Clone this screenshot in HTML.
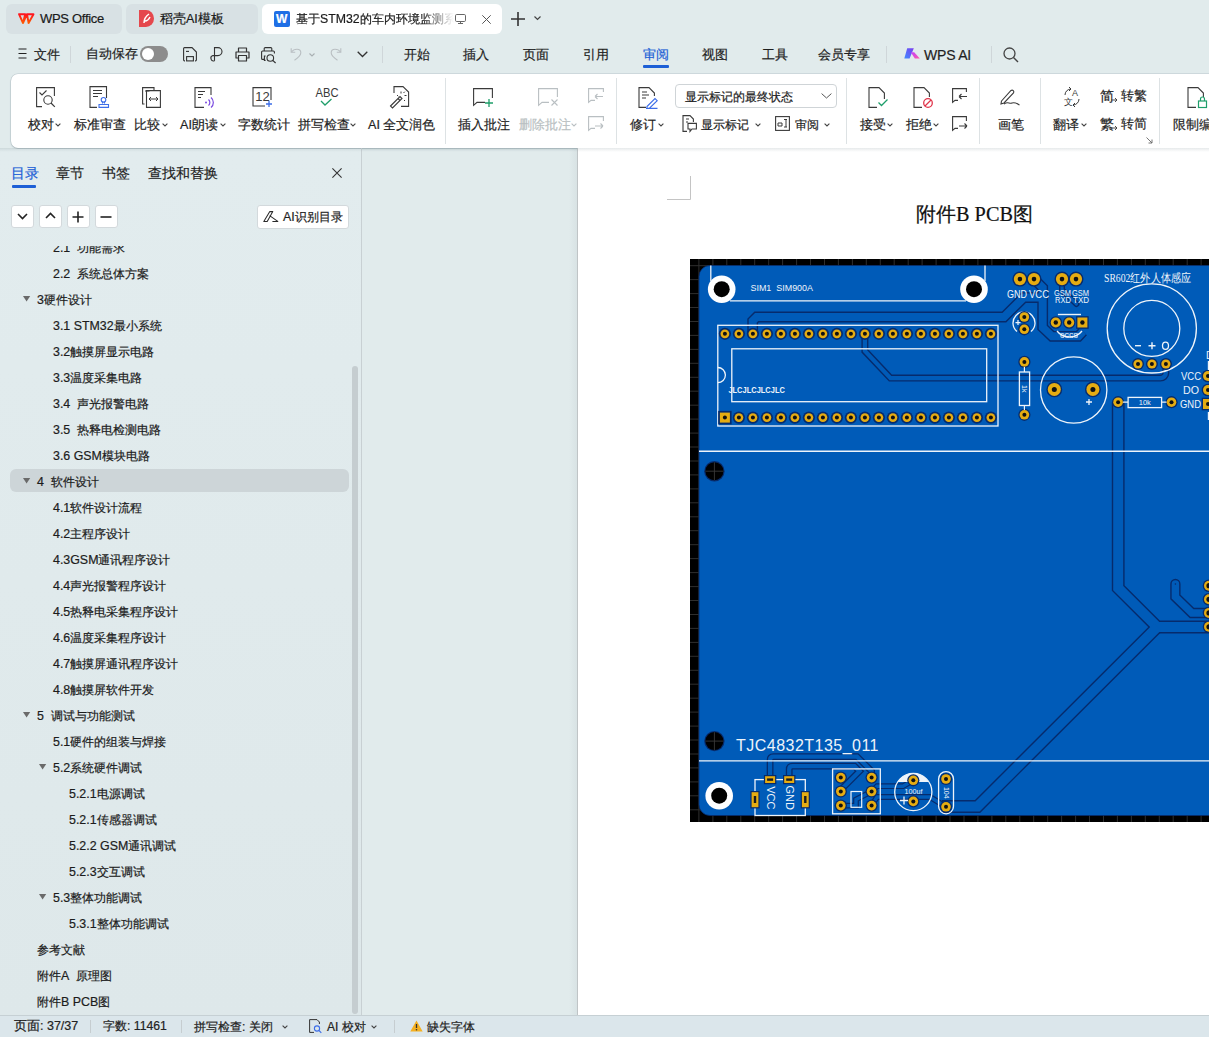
<!DOCTYPE html>
<html><head><meta charset="utf-8">
<style>
*{box-sizing:border-box}
html,body{margin:0;padding:0;width:1209px;height:1037px;overflow:hidden;background:#e1ebec;font-family:"Liberation Sans",sans-serif;color:#1f1f1f;position:relative}
.a{position:absolute;white-space:nowrap;line-height:1;-webkit-text-stroke:0.2px currentColor}
.tab{position:absolute;top:4px;height:30px;border-radius:6px;background:#d8e1e4}
.m{font-size:13.4px;top:48px}
.rl{font-size:12.5px;top:117px}
.toc{position:absolute;font-size:12.5px;white-space:nowrap;line-height:1}
.tri{position:absolute;width:0;height:0;border-left:3.6px solid transparent;border-right:3.6px solid transparent;border-top:5.4px solid #6a6a6a}
.sep{position:absolute;width:1px;background:#cfd6d9}
svg{position:absolute;overflow:visible}
</style></head><body>
<!-- tabs -->
<div class="tab" style="left:6px;width:116px"></div>
<div class="tab" style="left:126px;width:132px"></div>
<div class="tab" style="left:262px;width:240px;background:#fff"></div>
<svg style="left:17px;top:12px" width="18" height="13" viewBox="0 0 18 13"><defs><linearGradient id="wl" x1="0" y1="0" x2="0" y2="1"><stop offset="0" stop-color="#ff1420"/><stop offset="1" stop-color="#ff5a00"/></linearGradient></defs><path d="M2 2.2 H8.2 L6 11 Z M10 2.2 H16.5 L11.6 11 Z M9.8 2.4 L6 11" fill="none" stroke="url(#wl)" stroke-width="1.9" stroke-linejoin="round"/></svg>
<div class="a" style="left:40px;top:12px;font-size:13px;color:#1a1a1a;letter-spacing:-0.3px">WPS Office</div>
<svg style="left:139px;top:10px" width="15" height="17" viewBox="0 0 15 17"><path d="M0 0 H7 A8 8.5 0 0 1 7 17 H0 Z" fill="#e5484d"/><path d="M5 13 C5 9 7 6 10 4 M6 11 C8 11 10 9 11 7" fill="none" stroke="#fff" stroke-width="1.5"/></svg>
<div class="a" style="left:160px;top:12.5px;font-size:12.5px;color:#1a1a1a">稻壳AI模板</div>
<div style="position:absolute;left:274px;top:11px;width:16px;height:16px;background:#1f6fe5;border-radius:2px"></div>
<div class="a" style="left:276px;top:13px;font-size:12px;font-weight:bold;color:#fff">W</div>
<div class="a" style="left:296px;top:12.5px;font-size:12.3px;color:#1a1a1a;width:158px;overflow:hidden;-webkit-mask-image:linear-gradient(90deg,#000 80%,transparent)">基于STM32的车内环境监测系统</div>
<svg style="left:455px;top:14px" width="11" height="10" viewBox="0 0 11 10"><rect x="0.5" y="0.5" width="10" height="7" rx="1.2" fill="none" stroke="#666" stroke-width="1"/><path d="M3 9.5 H8 M5.5 7.5 V9.5" stroke="#666" stroke-width="1"/></svg>
<svg style="left:481.5px;top:14.5px" width="9" height="9" viewBox="0 0 9 9"><path d="M0.3 0.3 L8.7 8.7 M8.7 0.3 L0.3 8.7" stroke="#555" stroke-width="1"/></svg>
<svg style="left:511px;top:12px" width="14" height="14" viewBox="0 0 14 14"><path d="M7 0 V14 M0 7 H14" stroke="#333" stroke-width="1.6"/></svg>
<svg style="left:534px;top:16px" width="7" height="5" viewBox="0 0 7 5"><path d="M0.5 0.5 L3.5 3.5 L6.5 0.5" fill="none" stroke="#444" stroke-width="1.2"/></svg>

<!-- menu row -->
<svg style="left:18px;top:48px" width="9" height="11" viewBox="0 0 9 11"><path d="M0.5 1 H8.5 M0.5 5.5 H8.5 M0.5 10 H8.5" stroke="#222" stroke-width="1.1"/></svg>
<div class="a m" style="left:34px">文件</div>
<div class="sep" style="left:70px;top:46px;height:17px"></div>
<div class="a" style="left:86px;top:47px;font-size:13px">自动保存</div>
<div style="position:absolute;left:140px;top:46px;width:28px;height:16px;border-radius:8px;background:#8c8c8c"></div>
<div style="position:absolute;left:142px;top:48px;width:12px;height:12px;border-radius:6px;background:#fff"></div>
<svg style="left:183px;top:47px" width="15" height="15" viewBox="0 0 15 15"><path d="M2 13.9 H1.5 A1 1 0 0 1 0.6 13 V1.5 A1 1 0 0 1 1.5 0.6 H9 L13.4 5 V13 A1 1 0 0 1 12.5 13.9 H12" fill="none" stroke="#333" stroke-width="1.1"/><path d="M3 4.4 H6" stroke="#333" stroke-width="1.1"/><rect x="3.6" y="9.6" width="6.8" height="4.3" fill="none" stroke="#333" stroke-width="1.1"/></svg>
<svg style="left:210px;top:47px" width="14" height="15" viewBox="0 0 14 15"><path d="M4.5 13.8 V0.6 H8 A4 4 0 0 1 8 8.6 H2.8 A2.6 2.6 0 1 0 4.5 13.8" fill="none" stroke="#333" stroke-width="1.1"/></svg>
<svg style="left:235px;top:47px" width="15" height="15" viewBox="0 0 15 15"><path d="M3.5 5 V1 H11.5 V5 M3.5 11 H1 V5 H14 V11 H11.5 M3.5 8.5 H11.5 V14 H3.5 Z" fill="none" stroke="#333" stroke-width="1.2" stroke-linejoin="round"/></svg>
<svg style="left:261px;top:47px" width="16" height="16" viewBox="0 0 16 16"><path d="M3.2 4 V1.6 A1 1 0 0 1 4.2 0.6 H9.8 A1 1 0 0 1 10.8 1.6 V4" fill="none" stroke="#333" stroke-width="1.1"/><path d="M3 12.4 H1.6 A1 1 0 0 1 0.6 11.4 V5 A1 1 0 0 1 1.6 4 H12.4 A1 1 0 0 1 13.4 5 V6.5" fill="none" stroke="#333" stroke-width="1.1"/><path d="M4.6 9 H3.4 V13.4 H4.6" fill="none" stroke="#333" stroke-width="1.1"/><circle cx="9.3" cy="11" r="3.3" fill="none" stroke="#333" stroke-width="1.1"/><path d="M11.7 13.4 L14.6 16" stroke="#333" stroke-width="1.2"/></svg>
<svg style="left:290px;top:47px" width="12" height="14" viewBox="0 0 12 14"><path d="M1.2 1.2 V5.2 H5.2" fill="none" stroke="#b9bfc2" stroke-width="1.1"/><path d="M1.5 5 C4 1.5 10.8 1 10.8 5.8 C10.8 8.5 8 11 4.5 13.2" fill="none" stroke="#b9bfc2" stroke-width="1.1"/></svg>
<svg style="left:309px;top:53px" width="6" height="4" viewBox="0 0 6 4"><path d="M0.5 0.5 L3 3 L5.5 0.5" fill="none" stroke="#a9b0b3" stroke-width="1.1"/></svg>
<svg style="left:330px;top:47px" width="12" height="14" viewBox="0 0 12 14"><path d="M10.8 1.2 V5.2 H6.8" fill="none" stroke="#b9bfc2" stroke-width="1.1"/><path d="M10.5 5 C8 1.5 1.2 1 1.2 5.8 C1.2 8.5 4 11 7.5 13.2" fill="none" stroke="#b9bfc2" stroke-width="1.1"/></svg>
<svg style="left:357px;top:51px" width="11" height="7" viewBox="0 0 11 7"><path d="M0.7 0.7 L5.5 5.5 L10.3 0.7" fill="none" stroke="#333" stroke-width="1.3"/></svg>
<div class="sep" style="left:382px;top:46px;height:17px"></div>
<div class="a m" style="left:404px">开始</div>
<div class="a m" style="left:463px">插入</div>
<div class="a m" style="left:523px">页面</div>
<div class="a m" style="left:583px">引用</div>
<div class="a m" style="left:643px;color:#1d5fd6">审阅</div>
<div style="position:absolute;left:643px;top:65px;width:26px;height:2.5px;border-radius:1px;background:#1d5fd6"></div>
<div class="a m" style="left:702px">视图</div>
<div class="a m" style="left:762px">工具</div>
<div class="a m" style="left:818px">会员专享</div>
<div class="sep" style="left:886px;top:46px;height:17px"></div>
<svg style="left:904px;top:47px" width="17" height="13" viewBox="0 0 17 13"><defs><linearGradient id="wg1" x1="0" y1="1" x2="1" y2="0"><stop offset="0" stop-color="#3f8cff"/><stop offset="1" stop-color="#7b3cf0"/></linearGradient><linearGradient id="wg2" x1="0" y1="0" x2="1" y2="1"><stop offset="0" stop-color="#c040ff"/><stop offset="1" stop-color="#ff5aa8"/></linearGradient></defs><path d="M3.2 1.3 H9.8 L5.6 11.6 H0.3 Z" fill="url(#wg1)"/><path d="M6.8 5.2 H10.2 L15.8 11.6 H10.8 Z" fill="url(#wg2)"/></svg>
<div class="a" style="left:924px;top:48px;font-size:14px;letter-spacing:-0.2px">WPS AI</div>
<div class="sep" style="left:991px;top:46px;height:17px"></div>
<svg style="left:1003px;top:47px" width="16" height="16" viewBox="0 0 16 16"><circle cx="6.5" cy="6.5" r="5.5" fill="none" stroke="#444" stroke-width="1.3"/><path d="M10.5 10.5 L15 15" stroke="#444" stroke-width="1.4"/></svg>

<!-- ribbon -->
<div style="position:absolute;left:10.5px;top:73.5px;width:1220px;height:74.5px;background:#fff;border-radius:7px 0 0 7px;box-shadow:0 0 0 0.6px rgba(120,140,150,0.35),0 1px 1.5px rgba(100,120,130,0.3)"></div>
<div id="ribbon"><svg style="left:36px;top:87px" width="20" height="21" viewBox="0 0 20 21"><path d="M6 19.6 H0.6 V0.6 H18.4 V9" fill="none" stroke="#3a3a3a" stroke-width="1.1"/><path d="M3.5 5.5 L6 8 L10.5 3.5" fill="none" stroke="#3a3a3a" stroke-width="1.1"/><circle cx="12" cy="13" r="4.2" fill="none" stroke="#3a3a3a" stroke-width="1.1"/><path d="M15 16 L18.8 19.8" stroke="#3a3a3a" stroke-width="1.2"/></svg>
<div class="a" style="left:28px;top:118.5px;font-size:12.6px">校对</div>
<svg style="left:55px;top:123px" width="6" height="4" viewBox="0 0 6 4"><path d="M0.6 0.6 L3 3 L5.4 0.6" fill="none" stroke="#444" stroke-width="1.1"/></svg>
<svg style="left:89px;top:86px" width="20" height="22" viewBox="0 0 20 22"><path d="M8 21.4 H1 V0.6 H17.5 V12" fill="none" stroke="#3a3a3a" stroke-width="1.1"/><path d="M4 4.5 H13 M4 7.5 H13 M4 10.5 H9" stroke="#3a3a3a" stroke-width="1.1"/><circle cx="14.5" cy="13.8" r="2.3" fill="none" stroke="#3d6ee8" stroke-width="1.1"/><path d="M13.5 16 V17.5 M15.5 16 V17.5 M10 18.5 H19.5 V21.4 H10 Z" fill="none" stroke="#3d6ee8" stroke-width="1.1"/></svg>
<div class="a" style="left:74px;top:118.5px;font-size:12.6px">标准审查</div>
<svg style="left:142px;top:87px" width="19" height="21" viewBox="0 0 19 21"><path d="M2.5 17 H0.6 V0.6 H12 V3.2" fill="none" stroke="#3a3a3a" stroke-width="1.1"/><path d="M4.5 3.6 H18.4 V20.4 H4.5 Z" fill="none" stroke="#3a3a3a" stroke-width="1.1"/><path d="M3 4 H7.5 M7 12 H16 M7 12 L9 10 M7 12 L9 14 M16 12 L14 10 M16 12 L14 14" fill="none" stroke="#3a3a3a" stroke-width="1"/></svg>
<div class="a" style="left:134px;top:118.5px;font-size:12.6px">比较</div>
<svg style="left:162px;top:123px" width="6" height="4" viewBox="0 0 6 4"><path d="M0.6 0.6 L3 3 L5.4 0.6" fill="none" stroke="#444" stroke-width="1.1"/></svg>
<svg style="left:194px;top:87px" width="20" height="21" viewBox="0 0 20 21"><path d="M10 20.4 H1 V0.6 H17 V8" fill="none" stroke="#3a3a3a" stroke-width="1.1"/><path d="M4 4.5 H11 M4 7.5 H9 M4 10.5 H7" stroke="#3a3a3a" stroke-width="1.1"/><circle cx="12" cy="15.5" r="1" fill="#7b4ce0"/><path d="M14.5 12.5 A4 4 0 0 1 14.5 18.5 M17 10.5 A6.5 6.5 0 0 1 17 20.5" fill="none" stroke="#7b4ce0" stroke-width="1.2"/></svg>
<div class="a" style="left:180px;top:118.5px;font-size:12.6px">AI朗读</div>
<svg style="left:220px;top:123px" width="6" height="4" viewBox="0 0 6 4"><path d="M0.6 0.6 L3 3 L5.4 0.6" fill="none" stroke="#444" stroke-width="1.1"/></svg>
<svg style="left:252px;top:87px" width="20" height="20" viewBox="0 0 20 20"><path d="M13 19 H1 V0.6 H19 V13" fill="none" stroke="#3a3a3a" stroke-width="1.1"/><text x="3.2" y="14.3" font-family="Liberation Sans" font-size="13" fill="#3a3a3a">12</text><path d="M17 14 V20 M14 17 H20" stroke="#3d6ee8" stroke-width="1.3"/></svg>
<div class="a" style="left:238px;top:118.5px;font-size:12.6px">字数统计</div>
<svg style="left:315px;top:86px" width="24" height="22" viewBox="0 0 24 22"><text x="0.5" y="10.5" font-family="Liberation Sans" font-size="12" fill="#3a3a3a" textLength="23" lengthAdjust="spacingAndGlyphs">ABC</text><path d="M6 15 L10 19 L16.5 13" fill="none" stroke="#1e9e6a" stroke-width="1.3"/></svg>
<div class="a" style="left:298px;top:118.5px;font-size:12.6px">拼写检查</div>
<svg style="left:350px;top:123px" width="6" height="4" viewBox="0 0 6 4"><path d="M0.6 0.6 L3 3 L5.4 0.6" fill="none" stroke="#444" stroke-width="1.1"/></svg>
<svg style="left:388px;top:86px" width="22" height="23" viewBox="0 0 22 23"><path d="M6 7 V0.6 H15 L20.6 6 V20.4 H13" fill="none" stroke="#3a3a3a" stroke-width="1.1"/><path d="M2.5 20 L12 10.5 L14 12.5 L4.5 22 Z M10 12.5 L12 14.5" fill="none" stroke="#3a3a3a" stroke-width="1.1"/><path d="M13 5.5 V7.5 M16.5 9.5 H18.5 M9 9 L10.3 10.3 M16 14 L17 15 M15.5 7 L16.8 5.7" stroke="#3a3a3a" stroke-width="1"/></svg>
<div class="a" style="left:368px;top:118.5px;font-size:12.6px">AI 全文润色</div>
<div class="sep" style="left:445px;top:78px;height:66px;background:#dde2e4"></div>
<svg style="left:472px;top:88px" width="22" height="19" viewBox="0 0 22 19"><path d="M13 14.4 H5 L1.6 17.4 V0.6 H20.4 V10" fill="none" stroke="#3a3a3a" stroke-width="1.1"/><path d="M17 11 V19 M13 15 H21" stroke="#1e9e6a" stroke-width="1.3"/></svg>
<div class="a" style="left:458px;top:118.5px;font-size:12.6px">插入批注</div>
<svg style="left:537px;top:88px" width="22" height="19" viewBox="0 0 22 19"><path d="M12 14.4 H5 L1.6 17.4 V0.6 H20.4 V9" fill="none" stroke="#b9bfc2" stroke-width="1.1"/><path d="M14.5 11.5 L20.5 17.5 M20.5 11.5 L14.5 17.5" stroke="#b9bfc2" stroke-width="1.1"/></svg>
<div class="a" style="left:519px;top:118.5px;font-size:12.6px;color:#b9bfc2">删除批注</div>
<svg style="left:571px;top:123px" width="6" height="4" viewBox="0 0 6 4"><path d="M0.6 0.6 L3 3 L5.4 0.6" fill="none" stroke="#b9bfc2" stroke-width="1.1"/></svg>
<svg style="left:587px;top:88px" width="18" height="16" viewBox="0 0 18 16"><path d="M8 12.4 H4 L1.6 14.4 V0.6 H16.4 V4" fill="none" stroke="#b9bfc2" stroke-width="1.1"/><path d="M16 8.5 H8 M8 8.5 L10.5 6 M8 8.5 L10.5 11" fill="none" stroke="#b9bfc2" stroke-width="1.1"/></svg>
<svg style="left:587px;top:116px" width="18" height="16" viewBox="0 0 18 16"><path d="M8 12.4 H4 L1.6 14.4 V0.6 H16.4 V5" fill="none" stroke="#b9bfc2" stroke-width="1.1"/><path d="M8 10 H16 M16 10 L13.5 7.5 M16 10 L13.5 12.5" fill="none" stroke="#b9bfc2" stroke-width="1.1"/></svg>
<div class="sep" style="left:616px;top:78px;height:66px;background:#dde2e4"></div>
<svg style="left:638px;top:87px" width="20" height="21" viewBox="0 0 20 21"><path d="M8 20.4 H1 V0.6 H11 L16.4 6 V9" fill="none" stroke="#3a3a3a" stroke-width="1.1"/><path d="M4 5 H9 M4 8 H11 M4 11 H8" stroke="#3a3a3a" stroke-width="1.1"/><path d="M9 19.5 L17 11.5 L19.2 13.7 L11.2 21.4 H9 Z M8 21.4 H19.5" fill="none" stroke="#3d6ee8" stroke-width="1.1"/></svg>
<div class="a" style="left:630px;top:118.5px;font-size:12.6px">修订</div>
<svg style="left:658px;top:123px" width="6" height="4" viewBox="0 0 6 4"><path d="M0.6 0.6 L3 3 L5.4 0.6" fill="none" stroke="#444" stroke-width="1.1"/></svg>
<div style="position:absolute;left:675px;top:84px;width:162px;height:24px;border:1px solid #cfd4d7;border-radius:4px;background:#fff"></div>
<div class="a" style="left:685px;top:91.5px;font-size:11.9px">显示标记的最终状态</div>
<svg style="left:821px;top:93px" width="11" height="6" viewBox="0 0 11 6"><path d="M0.6 0.6 L5.5 5 L10.4 0.6" fill="none" stroke="#555" stroke-width="1"/></svg>
<svg style="left:682px;top:115px" width="15" height="17" viewBox="0 0 15 17"><path d="M5 16.4 H1 V0.6 H8 L11.4 4 V7" fill="none" stroke="#3a3a3a" stroke-width="1.1"/><path d="M4 4 H7 M4 7 H6" stroke="#3a3a3a" stroke-width="1"/><path d="M6 8.4 H14.4 V14 H10 L8 16.4 V14 H6 Z" fill="none" stroke="#3a3a3a" stroke-width="1.1"/></svg>
<div class="a" style="left:701px;top:118.5px;font-size:12px">显示标记</div>
<svg style="left:755px;top:123px" width="6" height="4" viewBox="0 0 6 4"><path d="M0.6 0.6 L3 3 L5.4 0.6" fill="none" stroke="#444" stroke-width="1.1"/></svg>
<svg style="left:775px;top:116px" width="15" height="15" viewBox="0 0 15 15"><rect x="0.6" y="0.6" width="13.8" height="13.8" fill="none" stroke="#3a3a3a" stroke-width="1.1"/><path d="M3 7 H7 V10 H3 Z M9 3.5 H12 M9 11 H12 M11 3.5 V11" fill="none" stroke="#3a3a3a" stroke-width="1"/></svg>
<div class="a" style="left:795px;top:118.5px;font-size:12px">审阅</div>
<svg style="left:824px;top:123px" width="6" height="4" viewBox="0 0 6 4"><path d="M0.6 0.6 L3 3 L5.4 0.6" fill="none" stroke="#444" stroke-width="1.1"/></svg>
<div class="sep" style="left:846px;top:78px;height:66px;background:#dde2e4"></div>
<svg style="left:868px;top:87px" width="20" height="21" viewBox="0 0 20 21"><path d="M9 20.4 H1 V0.6 H11 L16.4 6 V12" fill="none" stroke="#3a3a3a" stroke-width="1.1"/><path d="M10.5 15.5 L13.5 18.5 L19.5 12.5" fill="none" stroke="#1e9e6a" stroke-width="1.3"/></svg>
<div class="a" style="left:860px;top:118.5px;font-size:12.6px">接受</div>
<svg style="left:887px;top:123px" width="6" height="4" viewBox="0 0 6 4"><path d="M0.6 0.6 L3 3 L5.4 0.6" fill="none" stroke="#444" stroke-width="1.1"/></svg>
<svg style="left:913px;top:87px" width="20" height="21" viewBox="0 0 20 21"><path d="M9 20.4 H1 V0.6 H11 L16.4 6 V10" fill="none" stroke="#3a3a3a" stroke-width="1.1"/><circle cx="15" cy="16" r="4.3" fill="none" stroke="#e0344a" stroke-width="1.3"/><path d="M12 19 L18 13" stroke="#e0344a" stroke-width="1.3"/></svg>
<div class="a" style="left:906px;top:118.5px;font-size:12.6px">拒绝</div>
<svg style="left:933px;top:123px" width="6" height="4" viewBox="0 0 6 4"><path d="M0.6 0.6 L3 3 L5.4 0.6" fill="none" stroke="#444" stroke-width="1.1"/></svg>
<svg style="left:951px;top:88px" width="17" height="16" viewBox="0 0 17 16"><path d="M7 12.4 H4 L1.6 14.4 V0.6 H15.4 V4" fill="none" stroke="#3a3a3a" stroke-width="1.1"/><path d="M16 8.5 H8 M8 8.5 L10.5 6 M8 8.5 L10.5 11" fill="none" stroke="#3a3a3a" stroke-width="1.1"/></svg>
<svg style="left:951px;top:116px" width="17" height="16" viewBox="0 0 17 16"><path d="M7 12.4 H4 L1.6 14.4 V0.6 H15.4 V5" fill="none" stroke="#3a3a3a" stroke-width="1.1"/><path d="M8 10 H16 M16 10 L13.5 7.5 M16 10 L13.5 12.5" fill="none" stroke="#3a3a3a" stroke-width="1.1"/></svg>
<div class="sep" style="left:979px;top:78px;height:66px;background:#dde2e4"></div>
<svg style="left:1000px;top:88px" width="20" height="18" viewBox="0 0 20 18"><path d="M1.5 13 L11 2.5 A1.8 1.8 0 0 1 13.5 5 L4 15 L1 16 Z" fill="none" stroke="#3a3a3a" stroke-width="1.1"/><path d="M4 16 C8 13 9 16 12 15 C15 14 16 15 19.5 17" fill="none" stroke="#3a3a3a" stroke-width="1.1"/></svg>
<div class="a" style="left:998px;top:118.5px;font-size:12.6px">画笔</div>
<div class="sep" style="left:1040px;top:78px;height:66px;background:#dde2e4"></div>
<svg style="left:1063px;top:87px" width="18" height="21" viewBox="0 0 18 21"><path d="M2 8 A6 6 0 0 1 8 2 M6 0 L8 2 L6 4 M16 12 A6 6 0 0 1 10 18 M12 16 L10 18 L12 20" fill="none" stroke="#3a3a3a" stroke-width="1"/><text x="9" y="9" font-family="Liberation Sans" font-size="9" fill="#3a3a3a">A</text><text x="1" y="18" font-family="Liberation Sans" font-size="9" fill="#3a3a3a">文</text></svg>
<div class="a" style="left:1053px;top:118.5px;font-size:12.6px">翻译</div>
<svg style="left:1081px;top:123px" width="6" height="4" viewBox="0 0 6 4"><path d="M0.6 0.6 L3 3 L5.4 0.6" fill="none" stroke="#444" stroke-width="1.1"/></svg>
<div class="a" style="left:1100px;top:89px;font-size:14px">简</div>
<svg style="left:1111px;top:97px" width="7" height="6" viewBox="0 0 7 6"><path d="M0 3 H6 M4 1 L6 3 L4 5" fill="none" stroke="#3a3a3a" stroke-width="0.9"/></svg>
<div class="a" style="left:1121px;top:90px;font-size:12.6px">转繁</div>
<div class="a" style="left:1100px;top:117px;font-size:14px">繁</div>
<svg style="left:1111px;top:125px" width="7" height="6" viewBox="0 0 7 6"><path d="M0 3 H6 M4 1 L6 3 L4 5" fill="none" stroke="#3a3a3a" stroke-width="0.9"/></svg>
<div class="a" style="left:1121px;top:118px;font-size:12.6px">转简</div>
<svg style="left:1146px;top:137px" width="7" height="7" viewBox="0 0 7 7"><path d="M0.5 0.5 L6 6 M6 2.5 V6 H2.5" fill="none" stroke="#666" stroke-width="0.9"/></svg>
<div class="sep" style="left:1159px;top:78px;height:66px;background:#dde2e4"></div>
<svg style="left:1187px;top:87px" width="22" height="21" viewBox="0 0 22 21"><path d="M9 20.4 H1 V0.6 H11 L16.4 6 V10" fill="none" stroke="#3a3a3a" stroke-width="1.1"/><rect x="11.5" y="14" width="8" height="6.5" fill="none" stroke="#1e9e6a" stroke-width="1.2"/><path d="M13.5 14 V12 A2 2 0 0 1 17.5 12 V14" fill="none" stroke="#1e9e6a" stroke-width="1.2"/></svg>
<div class="a" style="left:1173px;top:118.5px;font-size:12.6px">限制编辑</div>
</div><!--/ribbon-->
<!-- left panel -->
<div style="position:absolute;left:0;top:149px;width:361px;height:866px;background:linear-gradient(#e2ecee,#dee8ea)"></div>
<div style="position:absolute;left:361px;top:148px;width:1px;height:867px;background:#c8d0d3"></div>
<div id="panel"><div class="a" style="left:11px;top:166px;font-size:14px;color:#1d5fd6">目录</div>
<div style="position:absolute;left:12px;top:185px;width:24px;height:2.5px;background:#1d5fd6;border-radius:1px"></div>
<div class="a" style="left:56px;top:166px;font-size:14px">章节</div>
<div class="a" style="left:102px;top:166px;font-size:14px">书签</div>
<div class="a" style="left:148px;top:166px;font-size:14px">查找和替换</div>
<svg style="left:332px;top:168px" width="10" height="10" viewBox="0 0 10 10"><path d="M0.4 0.4 L9.6 9.6 M9.6 0.4 L0.4 9.6" stroke="#333" stroke-width="1.1"/></svg>
<div style="position:absolute;left:11px;top:205px;width:23px;height:23px;border:1px solid #d3d9dc;border-radius:3px;background:#fff"></div>
<div style="position:absolute;left:39px;top:205px;width:23px;height:23px;border:1px solid #d3d9dc;border-radius:3px;background:#fff"></div>
<div style="position:absolute;left:67px;top:205px;width:23px;height:23px;border:1px solid #d3d9dc;border-radius:3px;background:#fff"></div>
<div style="position:absolute;left:95px;top:205px;width:23px;height:23px;border:1px solid #d3d9dc;border-radius:3px;background:#fff"></div>
<svg style="left:17px;top:213px" width="11" height="7" viewBox="0 0 11 7"><path d="M1 1 L5.5 5.5 L10 1" fill="none" stroke="#222" stroke-width="1.6"/></svg>
<svg style="left:45px;top:212px" width="11" height="7" viewBox="0 0 11 7"><path d="M1 6 L5.5 1.5 L10 6" fill="none" stroke="#222" stroke-width="1.6"/></svg>
<svg style="left:72px;top:211px" width="12" height="12" viewBox="0 0 12 12"><path d="M6 0.5 V11.5 M0.5 6 H11.5" stroke="#222" stroke-width="1.6"/></svg>
<svg style="left:100px;top:211px" width="12" height="12" viewBox="0 0 12 12"><path d="M0.5 6 H11.5" stroke="#222" stroke-width="1.6"/></svg>
<div style="position:absolute;left:257px;top:205px;width:92px;height:24px;border:1px solid #d3d9dc;border-radius:3px;background:#fff"></div>
<svg style="left:263px;top:211px" width="16" height="11" viewBox="0 0 16 11"><path d="M0.8 10.4 L6.8 0.6 H9.8 L4.2 10.4 Z M6.6 4.6 L14.8 10.4 H9.4" fill="none" stroke="#2a2a2a" stroke-width="1.05" stroke-linejoin="round"/></svg>
<div class="a" style="left:283px;top:210.5px;font-size:12.4px">AI识别目录</div>
<div style="position:absolute;left:0;top:246px;width:352px;height:769px;overflow:hidden"><div style="position:absolute;left:10px;top:223px;width:339px;height:23px;border-radius:6px;background:#cdd5d8"></div>
<div class="a" style="left:53px;top:-3.8000000000000114px;font-size:12.4px;color:#1c1c1c">2.1&nbsp; 功能需求</div>
<div class="a" style="left:53px;top:22.19999999999999px;font-size:12.4px;color:#1c1c1c">2.2&nbsp; 系统总体方案</div>
<svg style="left:22.9px;top:49.89999999999998px" width="7.2" height="5.4" viewBox="0 0 7.2 5.4"><path d="M0 0 H7.2 L3.6 5.4 Z" fill="#6a6a6a"/></svg>
<div class="a" style="left:37px;top:48.19999999999999px;font-size:12.4px;color:#1c1c1c">3硬件设计</div>
<div class="a" style="left:53px;top:74.19999999999999px;font-size:12.4px;color:#1c1c1c">3.1 STM32最小系统</div>
<div class="a" style="left:53px;top:100.19999999999999px;font-size:12.4px;color:#1c1c1c">3.2触摸屏显示电路</div>
<div class="a" style="left:53px;top:126.19999999999999px;font-size:12.4px;color:#1c1c1c">3.3温度采集电路</div>
<div class="a" style="left:53px;top:152.2px;font-size:12.4px;color:#1c1c1c">3.4&nbsp; 声光报警电路</div>
<div class="a" style="left:53px;top:178.2px;font-size:12.4px;color:#1c1c1c">3.5&nbsp; 热释电检测电路</div>
<div class="a" style="left:53px;top:204.2px;font-size:12.4px;color:#1c1c1c">3.6 GSM模块电路</div>
<svg style="left:22.9px;top:231.89999999999998px" width="7.2" height="5.4" viewBox="0 0 7.2 5.4"><path d="M0 0 H7.2 L3.6 5.4 Z" fill="#6a6a6a"/></svg>
<div class="a" style="left:37px;top:230.2px;font-size:12.4px;color:#1c1c1c">4&nbsp; 软件设计</div>
<div class="a" style="left:53px;top:256.2px;font-size:12.4px;color:#1c1c1c">4.1软件设计流程</div>
<div class="a" style="left:53px;top:282.20000000000005px;font-size:12.4px;color:#1c1c1c">4.2主程序设计</div>
<div class="a" style="left:53px;top:308.20000000000005px;font-size:12.4px;color:#1c1c1c">4.3GSM通讯程序设计</div>
<div class="a" style="left:53px;top:334.20000000000005px;font-size:12.4px;color:#1c1c1c">4.4声光报警程序设计</div>
<div class="a" style="left:53px;top:360.20000000000005px;font-size:12.4px;color:#1c1c1c">4.5热释电采集程序设计</div>
<div class="a" style="left:53px;top:386.20000000000005px;font-size:12.4px;color:#1c1c1c">4.6温度采集程序设计</div>
<div class="a" style="left:53px;top:412.20000000000005px;font-size:12.4px;color:#1c1c1c">4.7触摸屏通讯程序设计</div>
<div class="a" style="left:53px;top:438.20000000000005px;font-size:12.4px;color:#1c1c1c">4.8触摸屏软件开发</div>
<svg style="left:22.9px;top:465.9000000000001px" width="7.2" height="5.4" viewBox="0 0 7.2 5.4"><path d="M0 0 H7.2 L3.6 5.4 Z" fill="#6a6a6a"/></svg>
<div class="a" style="left:37px;top:464.20000000000005px;font-size:12.4px;color:#1c1c1c">5&nbsp; 调试与功能测试</div>
<div class="a" style="left:53px;top:490.20000000000005px;font-size:12.4px;color:#1c1c1c">5.1硬件的组装与焊接</div>
<svg style="left:38.9px;top:517.9000000000001px" width="7.2" height="5.4" viewBox="0 0 7.2 5.4"><path d="M0 0 H7.2 L3.6 5.4 Z" fill="#6a6a6a"/></svg>
<div class="a" style="left:53px;top:516.2px;font-size:12.4px;color:#1c1c1c">5.2系统硬件调试</div>
<div class="a" style="left:69px;top:542.2px;font-size:12.4px;color:#1c1c1c">5.2.1电源调试</div>
<div class="a" style="left:69px;top:568.2px;font-size:12.4px;color:#1c1c1c">5.2.1传感器调试</div>
<div class="a" style="left:69px;top:594.2px;font-size:12.4px;color:#1c1c1c">5.2.2 GSM通讯调试</div>
<div class="a" style="left:69px;top:620.2px;font-size:12.4px;color:#1c1c1c">5.2.3交互调试</div>
<svg style="left:38.9px;top:647.9000000000001px" width="7.2" height="5.4" viewBox="0 0 7.2 5.4"><path d="M0 0 H7.2 L3.6 5.4 Z" fill="#6a6a6a"/></svg>
<div class="a" style="left:53px;top:646.2px;font-size:12.4px;color:#1c1c1c">5.3整体功能调试</div>
<div class="a" style="left:69px;top:672.2px;font-size:12.4px;color:#1c1c1c">5.3.1整体功能调试</div>
<div class="a" style="left:37px;top:698.2px;font-size:12.4px;color:#1c1c1c">参考文献</div>
<div class="a" style="left:37px;top:724.2px;font-size:12.4px;color:#1c1c1c">附件A&nbsp; 原理图</div>
<div class="a" style="left:37px;top:750.2px;font-size:12.4px;color:#1c1c1c">附件B PCB图</div>
</div>
<div style="position:absolute;left:352px;top:366px;width:6px;height:648px;border-radius:3px;background:#c5cdd0"></div>
</div><!--/panel-->
<!-- page -->
<div style="position:absolute;left:577px;top:148px;width:632px;height:867px;background:#fff;border-left:1px solid #bfc4c6"></div>
<div style="position:absolute;left:569px;top:148px;width:8px;height:867px;background:linear-gradient(90deg,rgba(90,110,120,0),rgba(90,110,120,0.07))"></div>
<div id="doc"><svg style="left:667px;top:176px" width="24" height="24" viewBox="0 0 24 24"><path d="M23.5 0 V23.5 H0" fill="none" stroke="#c4c4c4" stroke-width="1"/></svg>
<div class="a" style="left:916px;top:203.5px;font-size:20.3px;font-family:'Liberation Serif',serif;color:#111">附件B PCB图</div>
<div style="position:absolute;left:577px;top:148px;width:632px;height:867px;overflow:hidden"><svg style="left:0;top:0" width="632" height="867" viewBox="577 148 632 867"><defs></defs><rect x="690" y="259" width="600" height="563" fill="#000"/>
<path d="M698.9 259 V822 M712.9 259 V822 M726.8 259 V822 M740.8 259 V822 M754.7 259 V822 M768.7 259 V822 M782.6 259 V822 M796.6 259 V822 M810.5 259 V822 M824.5 259 V822 M838.4 259 V822 M852.4 259 V822 M866.3 259 V822 M880.3 259 V822 M894.2 259 V822 M908.2 259 V822 M922.1 259 V822 M936.1 259 V822 M950.0 259 V822 M964.0 259 V822 M977.9 259 V822 M991.9 259 V822 M1005.8 259 V822 M1019.8 259 V822 M1033.7 259 V822 M1047.7 259 V822 M1061.6 259 V822 M1075.6 259 V822 M1089.5 259 V822 M1103.5 259 V822 M1117.4 259 V822 M1131.4 259 V822 M1145.3 259 V822 M1159.3 259 V822 M1173.2 259 V822 M1187.2 259 V822 M1201.1 259 V822 M690 265.7 H1215 M690 279.6 H1215 M690 293.6 H1215 M690 307.5 H1215 M690 321.5 H1215 M690 335.4 H1215 M690 349.4 H1215 M690 363.3 H1215 M690 377.3 H1215 M690 391.2 H1215 M690 405.2 H1215 M690 419.1 H1215 M690 433.1 H1215 M690 447.0 H1215 M690 461.0 H1215 M690 474.9 H1215 M690 488.9 H1215 M690 502.8 H1215 M690 516.8 H1215 M690 530.7 H1215 M690 544.7 H1215 M690 558.6 H1215 M690 572.6 H1215 M690 586.6 H1215 M690 600.5 H1215 M690 614.5 H1215 M690 628.4 H1215 M690 642.4 H1215 M690 656.3 H1215 M690 670.3 H1215 M690 684.2 H1215 M690 698.2 H1215 M690 712.1 H1215 M690 726.1 H1215 M690 740.0 H1215 M690 754.0 H1215 M690 767.9 H1215 M690 781.9 H1215 M690 795.8 H1215 M690 809.8 H1215 " stroke="#2e2e2e" stroke-width="1"/>
<path d="M710 265.5 H1215 V815.5 H710 A11 11 0 0 1 699 804.5 V276.5 A11 11 0 0 1 710 265.5 Z" fill="#005bb8" stroke="#062b6c" stroke-width="0.8"/>
<path d="M752.7 333.8 V321 L756.7 317 H1004 L1023.6 297.6 H1042.7 V327.5 L1052 336.3 H1078.5 L1083 331.5" fill="none" stroke="#062b6c" stroke-width="10.8" stroke-linejoin="miter" stroke-linecap="butt"/>
<path d="M1034 279 L1042.7 287.7 V297.6" fill="none" stroke="#062b6c" stroke-width="10.8" stroke-linejoin="miter" stroke-linecap="butt"/>
<path d="M752.7 333.8 V321 L756.7 317 H1004 L1023.6 297.6 H1042.7 V327.5 L1052 336.3 H1078.5 L1083 331.5" fill="none" stroke="#005bb8" stroke-width="8" stroke-linejoin="miter" stroke-linecap="butt"/>
<path d="M1034 279 L1042.7 287.7 V297.6" fill="none" stroke="#005bb8" stroke-width="8" stroke-linejoin="miter" stroke-linecap="butt"/>
<path d="M864.9 333.8 V351 L890.5 378.1 H1160 A5.5 5.5 0 0 0 1165.9 372.5 V364" fill="none" stroke="#062b6c" stroke-width="7.0" stroke-linejoin="miter" stroke-linecap="round"/>
<path d="M864.9 333.8 V351 L890.5 378.1 H1160 A5.5 5.5 0 0 0 1165.9 372.5 V364" fill="none" stroke="#005bb8" stroke-width="4.2" stroke-linejoin="miter" stroke-linecap="round"/>
<path d="M1118.2 402.2 V588.1 L1157.3 627 H1215" fill="none" stroke="#062b6c" stroke-width="12.8" stroke-linejoin="miter" stroke-linecap="butt"/>
<path d="M1157.3 627 L977.5 806.5 H942" fill="none" stroke="#062b6c" stroke-width="12.8" stroke-linejoin="miter" stroke-linecap="butt"/>
<path d="M1118.2 402.2 V588.1 L1157.3 627 H1215" fill="none" stroke="#005bb8" stroke-width="10" stroke-linejoin="miter" stroke-linecap="butt"/>
<path d="M1157.3 627 L977.5 806.5 H942" fill="none" stroke="#005bb8" stroke-width="10" stroke-linejoin="miter" stroke-linecap="butt"/>
<path d="M1175.4 584 V597 L1191.9 613 H1215" fill="none" stroke="#062b6c" stroke-width="10.3" stroke-linejoin="miter" stroke-linecap="round"/>
<path d="M1175.4 584 V597 L1191.9 613 H1215" fill="none" stroke="#005bb8" stroke-width="7.5" stroke-linejoin="miter" stroke-linecap="round"/>
<path d="M1062 279 V290 L1076.5 304" fill="none" stroke="#062b6c" stroke-width="6.0" stroke-linejoin="miter" stroke-linecap="round"/>
<path d="M1062 279 V290 L1076.5 304" fill="none" stroke="#005bb8" stroke-width="3.2" stroke-linejoin="miter" stroke-linecap="round"/>
<path d="M770.1 779.6 V760 Q770.1 756.6 773.5 756.6 H857 L871.6 771.2 V777.6" fill="none" stroke="#062b6c" stroke-width="6.800000000000001" stroke-linejoin="miter" stroke-linecap="butt"/>
<path d="M789.2 779.6 V769.5 Q789.2 766.2 792.5 766.2 H854.5 L859.5 771.2 L841 789.7" fill="none" stroke="#062b6c" stroke-width="6.800000000000001" stroke-linejoin="miter" stroke-linecap="butt"/>
<path d="M770.1 779.6 V760 Q770.1 756.6 773.5 756.6 H857 L871.6 771.2 V777.6" fill="none" stroke="#005bb8" stroke-width="4.2" stroke-linejoin="miter" stroke-linecap="butt"/>
<path d="M789.2 779.6 V769.5 Q789.2 766.2 792.5 766.2 H854.5 L859.5 771.2 L841 789.7" fill="none" stroke="#005bb8" stroke-width="4.2" stroke-linejoin="miter" stroke-linecap="butt"/>
<path d="M871.6 791.5 L877 786.2 H903 L913.3 780.3" fill="none" stroke="#062b6c" stroke-width="5.8" stroke-linejoin="miter" stroke-linecap="butt"/>
<path d="M871.6 805.6 L877 797 H930 L946 806.8" fill="none" stroke="#062b6c" stroke-width="5.8" stroke-linejoin="miter" stroke-linecap="butt"/>
<path d="M871.6 791.5 L856 799.5 V805.6 H840.8" fill="none" stroke="#062b6c" stroke-width="5.8" stroke-linejoin="miter" stroke-linecap="butt"/>
<path d="M871.6 791.5 L877 786.2 H903 L913.3 780.3" fill="none" stroke="#005bb8" stroke-width="3.4" stroke-linejoin="miter" stroke-linecap="butt"/>
<path d="M871.6 805.6 L877 797 H930 L946 806.8" fill="none" stroke="#005bb8" stroke-width="3.4" stroke-linejoin="miter" stroke-linecap="butt"/>
<path d="M871.6 791.5 L856 799.5 V805.6 H840.8" fill="none" stroke="#005bb8" stroke-width="3.4" stroke-linejoin="miter" stroke-linecap="butt"/>
<path d="M699 451.2 H1215" fill="none" stroke="#eef4fa" stroke-width="1.4"/>
<path d="M699 760.9 H1215" fill="none" stroke="#eef4fa" stroke-width="1.4"/>
<circle cx="721.7" cy="289.2" r="13.8" fill="#fdfeff"/><circle cx="721.7" cy="289.2" r="8" fill="#000"/>
<circle cx="974" cy="289.2" r="13.8" fill="#fdfeff"/><circle cx="974" cy="289.2" r="8" fill="#000"/>
<circle cx="719.2" cy="795.7" r="13.8" fill="#fdfeff"/><circle cx="719.2" cy="795.7" r="8" fill="#000"/>
<circle cx="714.4" cy="471.2" r="10.2" fill="#062b6c"/><circle cx="714.4" cy="471.2" r="9" fill="#000"/>
<path d="M705.4 471.2 H723.4 M714.4 462.2 V480.2" stroke="#3a3a3a" stroke-width="0.9"/>
<circle cx="714.4" cy="741.1" r="10.2" fill="#062b6c"/><circle cx="714.4" cy="741.1" r="9" fill="#000"/>
<path d="M705.4 741.1 H723.4 M714.4 732.1 V750.1" stroke="#3a3a3a" stroke-width="0.9"/>
<path d="M710.8 265.5 V281" fill="none" stroke="#eef4fa" stroke-width="1.3"/>
<path d="M730 300.9 H966" fill="none" stroke="#eef4fa" stroke-width="1.3"/>
<path d="M985 265.5 V281" fill="none" stroke="#eef4fa" stroke-width="1.3"/>
<text x="750.5" y="291" font-family="Liberation Sans" font-size="9.5" fill="#eef4fa" textLength="62.5" lengthAdjust="spacingAndGlyphs">SIM1&#160;&#160;SIM900A</text>
<rect x="717.8" y="325.3" width="280.2" height="100.7" fill="none" stroke="#eef4fa" stroke-width="1.3"/>
<rect x="731.8" y="348.8" width="254.9" height="52.9" fill="none" stroke="#eef4fa" stroke-width="1.3"/>
<path d="M717.8 367.5 A7.6 7.6 0 0 1 717.8 382.7" fill="none" stroke="#eef4fa" stroke-width="1.3"/>
<text x="728.4" y="393.3" font-family="Liberation Sans" font-size="8.8" fill="#eef4fa" font-weight="bold" textLength="56.5" lengthAdjust="spacingAndGlyphs">JLCJLCJLCJLC</text>
<circle cx="724.9" cy="333.8" r="6.1000000000000005" fill="#062b6c"/>
<circle cx="724.9" cy="333.8" r="4.4" fill="#e5ac12"/>
<circle cx="724.9" cy="333.8" r="2" fill="#111"/>
<rect x="718.1999999999999" y="410.90000000000003" width="13.4" height="13.4" fill="#062b6c"/>
<rect x="719.9" y="412.6" width="10" height="10" fill="#e5ac12"/>
<circle cx="724.9" cy="417.6" r="2" fill="#111"/>
<circle cx="738.9" cy="333.8" r="6.1000000000000005" fill="#062b6c"/>
<circle cx="738.9" cy="333.8" r="4.4" fill="#e5ac12"/>
<circle cx="738.9" cy="333.8" r="2" fill="#111"/>
<circle cx="738.9" cy="417.6" r="6.1000000000000005" fill="#062b6c"/>
<circle cx="738.9" cy="417.6" r="4.4" fill="#e5ac12"/>
<circle cx="738.9" cy="417.6" r="2" fill="#111"/>
<circle cx="752.9" cy="333.8" r="6.1000000000000005" fill="#062b6c"/>
<circle cx="752.9" cy="333.8" r="4.4" fill="#e5ac12"/>
<circle cx="752.9" cy="333.8" r="2" fill="#111"/>
<circle cx="752.9" cy="417.6" r="6.1000000000000005" fill="#062b6c"/>
<circle cx="752.9" cy="417.6" r="4.4" fill="#e5ac12"/>
<circle cx="752.9" cy="417.6" r="2" fill="#111"/>
<circle cx="766.9" cy="333.8" r="6.1000000000000005" fill="#062b6c"/>
<circle cx="766.9" cy="333.8" r="4.4" fill="#e5ac12"/>
<circle cx="766.9" cy="333.8" r="2" fill="#111"/>
<circle cx="766.9" cy="417.6" r="6.1000000000000005" fill="#062b6c"/>
<circle cx="766.9" cy="417.6" r="4.4" fill="#e5ac12"/>
<circle cx="766.9" cy="417.6" r="2" fill="#111"/>
<circle cx="780.9" cy="333.8" r="6.1000000000000005" fill="#062b6c"/>
<circle cx="780.9" cy="333.8" r="4.4" fill="#e5ac12"/>
<circle cx="780.9" cy="333.8" r="2" fill="#111"/>
<circle cx="780.9" cy="417.6" r="6.1000000000000005" fill="#062b6c"/>
<circle cx="780.9" cy="417.6" r="4.4" fill="#e5ac12"/>
<circle cx="780.9" cy="417.6" r="2" fill="#111"/>
<circle cx="794.9" cy="333.8" r="6.1000000000000005" fill="#062b6c"/>
<circle cx="794.9" cy="333.8" r="4.4" fill="#e5ac12"/>
<circle cx="794.9" cy="333.8" r="2" fill="#111"/>
<circle cx="794.9" cy="417.6" r="6.1000000000000005" fill="#062b6c"/>
<circle cx="794.9" cy="417.6" r="4.4" fill="#e5ac12"/>
<circle cx="794.9" cy="417.6" r="2" fill="#111"/>
<circle cx="808.9" cy="333.8" r="6.1000000000000005" fill="#062b6c"/>
<circle cx="808.9" cy="333.8" r="4.4" fill="#e5ac12"/>
<circle cx="808.9" cy="333.8" r="2" fill="#111"/>
<circle cx="808.9" cy="417.6" r="6.1000000000000005" fill="#062b6c"/>
<circle cx="808.9" cy="417.6" r="4.4" fill="#e5ac12"/>
<circle cx="808.9" cy="417.6" r="2" fill="#111"/>
<circle cx="822.9" cy="333.8" r="6.1000000000000005" fill="#062b6c"/>
<circle cx="822.9" cy="333.8" r="4.4" fill="#e5ac12"/>
<circle cx="822.9" cy="333.8" r="2" fill="#111"/>
<circle cx="822.9" cy="417.6" r="6.1000000000000005" fill="#062b6c"/>
<circle cx="822.9" cy="417.6" r="4.4" fill="#e5ac12"/>
<circle cx="822.9" cy="417.6" r="2" fill="#111"/>
<circle cx="836.9" cy="333.8" r="6.1000000000000005" fill="#062b6c"/>
<circle cx="836.9" cy="333.8" r="4.4" fill="#e5ac12"/>
<circle cx="836.9" cy="333.8" r="2" fill="#111"/>
<circle cx="836.9" cy="417.6" r="6.1000000000000005" fill="#062b6c"/>
<circle cx="836.9" cy="417.6" r="4.4" fill="#e5ac12"/>
<circle cx="836.9" cy="417.6" r="2" fill="#111"/>
<circle cx="850.9" cy="333.8" r="6.1000000000000005" fill="#062b6c"/>
<circle cx="850.9" cy="333.8" r="4.4" fill="#e5ac12"/>
<circle cx="850.9" cy="333.8" r="2" fill="#111"/>
<circle cx="850.9" cy="417.6" r="6.1000000000000005" fill="#062b6c"/>
<circle cx="850.9" cy="417.6" r="4.4" fill="#e5ac12"/>
<circle cx="850.9" cy="417.6" r="2" fill="#111"/>
<circle cx="864.9" cy="333.8" r="6.1000000000000005" fill="#062b6c"/>
<circle cx="864.9" cy="333.8" r="4.4" fill="#e5ac12"/>
<circle cx="864.9" cy="333.8" r="2" fill="#111"/>
<circle cx="864.9" cy="417.6" r="6.1000000000000005" fill="#062b6c"/>
<circle cx="864.9" cy="417.6" r="4.4" fill="#e5ac12"/>
<circle cx="864.9" cy="417.6" r="2" fill="#111"/>
<circle cx="878.9" cy="333.8" r="6.1000000000000005" fill="#062b6c"/>
<circle cx="878.9" cy="333.8" r="4.4" fill="#e5ac12"/>
<circle cx="878.9" cy="333.8" r="2" fill="#111"/>
<circle cx="878.9" cy="417.6" r="6.1000000000000005" fill="#062b6c"/>
<circle cx="878.9" cy="417.6" r="4.4" fill="#e5ac12"/>
<circle cx="878.9" cy="417.6" r="2" fill="#111"/>
<circle cx="892.9" cy="333.8" r="6.1000000000000005" fill="#062b6c"/>
<circle cx="892.9" cy="333.8" r="4.4" fill="#e5ac12"/>
<circle cx="892.9" cy="333.8" r="2" fill="#111"/>
<circle cx="892.9" cy="417.6" r="6.1000000000000005" fill="#062b6c"/>
<circle cx="892.9" cy="417.6" r="4.4" fill="#e5ac12"/>
<circle cx="892.9" cy="417.6" r="2" fill="#111"/>
<circle cx="906.9" cy="333.8" r="6.1000000000000005" fill="#062b6c"/>
<circle cx="906.9" cy="333.8" r="4.4" fill="#e5ac12"/>
<circle cx="906.9" cy="333.8" r="2" fill="#111"/>
<circle cx="906.9" cy="417.6" r="6.1000000000000005" fill="#062b6c"/>
<circle cx="906.9" cy="417.6" r="4.4" fill="#e5ac12"/>
<circle cx="906.9" cy="417.6" r="2" fill="#111"/>
<circle cx="920.9" cy="333.8" r="6.1000000000000005" fill="#062b6c"/>
<circle cx="920.9" cy="333.8" r="4.4" fill="#e5ac12"/>
<circle cx="920.9" cy="333.8" r="2" fill="#111"/>
<circle cx="920.9" cy="417.6" r="6.1000000000000005" fill="#062b6c"/>
<circle cx="920.9" cy="417.6" r="4.4" fill="#e5ac12"/>
<circle cx="920.9" cy="417.6" r="2" fill="#111"/>
<circle cx="934.9" cy="333.8" r="6.1000000000000005" fill="#062b6c"/>
<circle cx="934.9" cy="333.8" r="4.4" fill="#e5ac12"/>
<circle cx="934.9" cy="333.8" r="2" fill="#111"/>
<circle cx="934.9" cy="417.6" r="6.1000000000000005" fill="#062b6c"/>
<circle cx="934.9" cy="417.6" r="4.4" fill="#e5ac12"/>
<circle cx="934.9" cy="417.6" r="2" fill="#111"/>
<circle cx="948.9" cy="333.8" r="6.1000000000000005" fill="#062b6c"/>
<circle cx="948.9" cy="333.8" r="4.4" fill="#e5ac12"/>
<circle cx="948.9" cy="333.8" r="2" fill="#111"/>
<circle cx="948.9" cy="417.6" r="6.1000000000000005" fill="#062b6c"/>
<circle cx="948.9" cy="417.6" r="4.4" fill="#e5ac12"/>
<circle cx="948.9" cy="417.6" r="2" fill="#111"/>
<circle cx="962.9" cy="333.8" r="6.1000000000000005" fill="#062b6c"/>
<circle cx="962.9" cy="333.8" r="4.4" fill="#e5ac12"/>
<circle cx="962.9" cy="333.8" r="2" fill="#111"/>
<circle cx="962.9" cy="417.6" r="6.1000000000000005" fill="#062b6c"/>
<circle cx="962.9" cy="417.6" r="4.4" fill="#e5ac12"/>
<circle cx="962.9" cy="417.6" r="2" fill="#111"/>
<circle cx="976.9" cy="333.8" r="6.1000000000000005" fill="#062b6c"/>
<circle cx="976.9" cy="333.8" r="4.4" fill="#e5ac12"/>
<circle cx="976.9" cy="333.8" r="2" fill="#111"/>
<circle cx="976.9" cy="417.6" r="6.1000000000000005" fill="#062b6c"/>
<circle cx="976.9" cy="417.6" r="4.4" fill="#e5ac12"/>
<circle cx="976.9" cy="417.6" r="2" fill="#111"/>
<circle cx="990.9" cy="333.8" r="6.1000000000000005" fill="#062b6c"/>
<circle cx="990.9" cy="333.8" r="4.4" fill="#e5ac12"/>
<circle cx="990.9" cy="333.8" r="2" fill="#111"/>
<circle cx="990.9" cy="417.6" r="6.1000000000000005" fill="#062b6c"/>
<circle cx="990.9" cy="417.6" r="4.4" fill="#e5ac12"/>
<circle cx="990.9" cy="417.6" r="2" fill="#111"/>
<circle cx="1019.9" cy="279.1" r="7.5" fill="#062b6c"/>
<circle cx="1019.9" cy="279.1" r="6.1" fill="#e5ac12"/>
<circle cx="1019.9" cy="279.1" r="2.3" fill="#111"/>
<circle cx="1034.0" cy="279.1" r="7.5" fill="#062b6c"/>
<circle cx="1034.0" cy="279.1" r="6.1" fill="#e5ac12"/>
<circle cx="1034.0" cy="279.1" r="2.3" fill="#111"/>
<circle cx="1062.0" cy="279.1" r="7.5" fill="#062b6c"/>
<circle cx="1062.0" cy="279.1" r="6.1" fill="#e5ac12"/>
<circle cx="1062.0" cy="279.1" r="2.3" fill="#111"/>
<circle cx="1076.0" cy="279.1" r="7.5" fill="#062b6c"/>
<circle cx="1076.0" cy="279.1" r="6.1" fill="#e5ac12"/>
<circle cx="1076.0" cy="279.1" r="2.3" fill="#111"/>
<text x="1007" y="297.5" font-family="Liberation Sans" font-size="10.5" fill="#eef4fa" textLength="20" lengthAdjust="spacingAndGlyphs">GND</text>
<text x="1029" y="297.5" font-family="Liberation Sans" font-size="10.5" fill="#eef4fa" textLength="20" lengthAdjust="spacingAndGlyphs">VCC</text>
<text x="1054" y="296" font-family="Liberation Sans" font-size="9" fill="#eef4fa" textLength="17" lengthAdjust="spacingAndGlyphs">GSM</text>
<text x="1072" y="296" font-family="Liberation Sans" font-size="9" fill="#eef4fa" textLength="17" lengthAdjust="spacingAndGlyphs">GSM</text>
<text x="1055" y="303.2" font-family="Liberation Sans" font-size="9" fill="#eef4fa" textLength="16" lengthAdjust="spacingAndGlyphs">RXD</text>
<text x="1073" y="303.2" font-family="Liberation Sans" font-size="9" fill="#eef4fa" textLength="16" lengthAdjust="spacingAndGlyphs">TXD</text>
<text x="1104" y="281.5" font-family="Liberation Serif" font-size="11.5" fill="#eef4fa" textLength="87" lengthAdjust="spacingAndGlyphs">SR602红外人体感应</text>
<circle cx="1151.8" cy="328.4" r="44.6" fill="none" stroke="#eef4fa" stroke-width="1.3"/>
<circle cx="1151.8" cy="328.4" r="28" fill="none" stroke="#eef4fa" stroke-width="1.3"/>
<path d="M1135 345.7 H1141" fill="none" stroke="#eef4fa" stroke-width="1.4"/>
<path d="M1148.5 345.7 H1155.5 M1152 342.2 V349.2" fill="none" stroke="#eef4fa" stroke-width="1.4"/>
<ellipse cx="1165.5" cy="345.7" rx="3" ry="3.6" fill="none" stroke="#eef4fa" stroke-width="1.3"/>
<circle cx="1138" cy="364" r="6.0" fill="#062b6c"/>
<circle cx="1138" cy="364" r="4.6" fill="#e5ac12"/>
<circle cx="1138" cy="364" r="2" fill="#111"/>
<circle cx="1151.9" cy="364" r="6.0" fill="#062b6c"/>
<circle cx="1151.9" cy="364" r="4.6" fill="#e5ac12"/>
<circle cx="1151.9" cy="364" r="2" fill="#111"/>
<circle cx="1165.9" cy="364" r="6.0" fill="#062b6c"/>
<circle cx="1165.9" cy="364" r="4.6" fill="#e5ac12"/>
<circle cx="1165.9" cy="364" r="2" fill="#111"/>
<path d="M1017 331.5 A11 11 0 1 1 1031 331.5" fill="none" stroke="#eef4fa" stroke-width="1.3"/>
<circle cx="1024.3" cy="317" r="6.1" fill="#062b6c"/>
<circle cx="1024.3" cy="317" r="4.8" fill="#e5ac12"/>
<circle cx="1024.3" cy="317" r="2" fill="#111"/>
<circle cx="1024.3" cy="329.3" r="6.1" fill="#062b6c"/>
<circle cx="1024.3" cy="329.3" r="4.8" fill="#e5ac12"/>
<circle cx="1024.3" cy="329.3" r="2" fill="#111"/>
<path d="M1015.5 322.6 H1020.5 M1018 320.1 V325.1" fill="none" stroke="#eef4fa" stroke-width="1.2"/>
<path d="M1057.9 314.5 H1081" fill="none" stroke="#eef4fa" stroke-width="1.4"/>
<circle cx="1055.8" cy="322.5" r="6.3" fill="#062b6c"/>
<circle cx="1055.8" cy="322.5" r="5" fill="#e5ac12"/>
<circle cx="1055.8" cy="322.5" r="2.2" fill="#111"/>
<circle cx="1069.2" cy="322.5" r="6.3" fill="#062b6c"/>
<circle cx="1069.2" cy="322.5" r="5" fill="#e5ac12"/>
<circle cx="1069.2" cy="322.5" r="2.2" fill="#111"/>
<rect x="1076.1000000000001" y="316.2" width="12.6" height="12.6" fill="#062b6c"/>
<rect x="1077.4" y="317.5" width="10" height="10" fill="#e5ac12"/>
<circle cx="1082.4" cy="322.5" r="2.2" fill="#111"/>
<path d="M1057 331 A16 16 0 0 0 1082 331" fill="none" stroke="#eef4fa" stroke-width="1.3"/>
<text x="1069" y="327.5" font-family="Liberation Sans" font-size="8" fill="#eef4fa" text-anchor="middle" transform="rotate(180 1069 330)">8550</text>
<circle cx="1024.4" cy="361.9" r="6.1" fill="#062b6c"/>
<circle cx="1024.4" cy="361.9" r="4.8" fill="#e5ac12"/>
<circle cx="1024.4" cy="361.9" r="2" fill="#111"/>
<circle cx="1024.4" cy="414.8" r="6.1" fill="#062b6c"/>
<circle cx="1024.4" cy="414.8" r="4.8" fill="#e5ac12"/>
<circle cx="1024.4" cy="414.8" r="2" fill="#111"/>
<rect x="1019.4" y="372" width="10.2" height="33.5" fill="none" stroke="#eef4fa" stroke-width="1.3"/>
<path d="M1024.4 367 V372 M1024.4 405.5 V410" fill="none" stroke="#eef4fa" stroke-width="1.2"/>
<text x="1024.4" y="388.7" font-family="Liberation Sans" font-size="7" fill="#eef4fa" text-anchor="middle" transform="rotate(90 1024.4 388.7)" dy="2.5">1k</text>
<circle cx="1073.7" cy="390" r="33.2" fill="none" stroke="#eef4fa" stroke-width="1.3"/>
<circle cx="1054.3" cy="389.4" r="7.9" fill="#062b6c"/>
<circle cx="1054.3" cy="389.4" r="6.5" fill="#e5ac12"/>
<circle cx="1054.3" cy="389.4" r="2.5" fill="#111"/>
<circle cx="1092.9" cy="389.4" r="7.9" fill="#062b6c"/>
<circle cx="1092.9" cy="389.4" r="6.5" fill="#e5ac12"/>
<circle cx="1092.9" cy="389.4" r="2.5" fill="#111"/>
<path d="M1086 402 H1092 M1089 399 V405" fill="none" stroke="#eef4fa" stroke-width="1.3"/>
<circle cx="1118.1" cy="402.2" r="6.1" fill="#062b6c"/>
<circle cx="1118.1" cy="402.2" r="4.8" fill="#e5ac12"/>
<circle cx="1118.1" cy="402.2" r="2" fill="#111"/>
<circle cx="1171.5" cy="402.2" r="6.1" fill="#062b6c"/>
<circle cx="1171.5" cy="402.2" r="4.8" fill="#e5ac12"/>
<circle cx="1171.5" cy="402.2" r="2" fill="#111"/>
<rect x="1128.1" y="397.4" width="33.5" height="10.2" fill="#005bb8" stroke="#eef4fa" stroke-width="1.3"/>
<path d="M1123 402.2 H1128 M1161.6 402.2 H1166.5" fill="none" stroke="#eef4fa" stroke-width="1.2"/>
<text x="1144.8" y="405" font-family="Liberation Sans" font-size="7.5" fill="#eef4fa" text-anchor="middle">10k</text>
<text x="1181" y="380" font-family="Liberation Sans" font-size="11" fill="#eef4fa" textLength="20" lengthAdjust="spacingAndGlyphs">VCC</text>
<text x="1183" y="394" font-family="Liberation Sans" font-size="11" fill="#eef4fa" textLength="16" lengthAdjust="spacingAndGlyphs">DO</text>
<text x="1180" y="408" font-family="Liberation Sans" font-size="11" fill="#eef4fa" textLength="21" lengthAdjust="spacingAndGlyphs">GND</text>
<circle cx="1208" cy="376" r="6.3" fill="#062b6c"/>
<circle cx="1208" cy="376" r="5" fill="#e5ac12"/>
<circle cx="1208" cy="376" r="2" fill="#111"/>
<circle cx="1208" cy="390" r="6.3" fill="#062b6c"/>
<circle cx="1208" cy="390" r="5" fill="#e5ac12"/>
<circle cx="1208" cy="390" r="2" fill="#111"/>
<rect x="1201.7" y="397.7" width="12.6" height="12.6" fill="#062b6c"/>
<rect x="1203.0" y="399.0" width="10" height="10" fill="#e5ac12"/>
<circle cx="1208" cy="404" r="2" fill="#111"/>
<text x="1206" y="358.5" font-family="Liberation Sans" font-size="10" fill="#eef4fa" >D</text>
<path d="M1208.5 361 V370 M1208.5 412 V420" fill="none" stroke="#eef4fa" stroke-width="1.4"/>
<circle cx="1209" cy="585.7" r="6.3" fill="#062b6c"/>
<circle cx="1209" cy="585.7" r="5" fill="#e5ac12"/>
<circle cx="1209" cy="585.7" r="2.6" fill="#111"/>
<circle cx="1209" cy="599.3" r="6.3" fill="#062b6c"/>
<circle cx="1209" cy="599.3" r="5" fill="#e5ac12"/>
<circle cx="1209" cy="599.3" r="2.6" fill="#111"/>
<circle cx="1209" cy="612.9" r="6.3" fill="#062b6c"/>
<circle cx="1209" cy="612.9" r="5" fill="#e5ac12"/>
<circle cx="1209" cy="612.9" r="2.6" fill="#111"/>
<circle cx="1209" cy="626.8" r="6.3" fill="#062b6c"/>
<circle cx="1209" cy="626.8" r="5" fill="#e5ac12"/>
<circle cx="1209" cy="626.8" r="2.6" fill="#111"/>
<circle cx="1175.4" cy="584" r="0.8" fill="#062b6c"/>
<text x="736" y="751.2" font-family="Liberation Sans" font-size="16" fill="#eef4fa" textLength="142.5" lengthAdjust="spacing" font-weight="normal">TJC4832T135_011</text>
<rect x="755" y="779.6" width="50.3" height="35.9" fill="none" stroke="#eef4fa" stroke-width="1.3"/>
<circle cx="770.1" cy="779.6" r="0" fill="#062b6c"/>
<circle cx="770.1" cy="779.6" r="0" fill="#e5ac12"/>
<circle cx="770.1" cy="779.6" r="0" fill="#111"/>
<rect x="763.9" y="775.0" width="12.4" height="9.2" fill="#062b6c"/><rect x="765.1" y="776.2" width="10" height="6.8" fill="#e5ac12"/><rect x="767.1" y="778.4" width="6" height="2.4" fill="#1a1a1a"/>
<rect x="783.0" y="775.0" width="12.4" height="9.2" fill="#062b6c"/><rect x="784.2" y="776.2" width="10" height="6.8" fill="#e5ac12"/><rect x="786.2" y="778.4" width="6" height="2.4" fill="#1a1a1a"/>
<rect x="750.4" y="791" width="9.2" height="17.4" fill="#062b6c"/><rect x="751.6" y="792.2" width="6.8" height="15" fill="#e5ac12"/><rect x="753.8" y="796" width="2.4" height="7" fill="#1a1a1a"/>
<rect x="800.6999999999999" y="791" width="9.2" height="17.4" fill="#062b6c"/><rect x="801.9" y="792.2" width="6.8" height="15" fill="#e5ac12"/><rect x="804.0999999999999" y="796" width="2.4" height="7" fill="#1a1a1a"/>
<text x="770.5" y="797.8" font-family="Liberation Sans" font-size="11" fill="#eef4fa" text-anchor="middle" transform="rotate(90 770.5 797.8)" dy="4">VCC</text>
<text x="789.5" y="797.8" font-family="Liberation Sans" font-size="11" fill="#eef4fa" text-anchor="middle" transform="rotate(90 789.5 797.8)" dy="4">GND</text>
<rect x="832.6" y="768.9" width="47.7" height="44.9" fill="none" stroke="#eef4fa" stroke-width="1.3"/>
<circle cx="840.8" cy="777.6" r="6.1" fill="#062b6c"/>
<circle cx="840.8" cy="777.6" r="4.8" fill="#e5ac12"/>
<circle cx="840.8" cy="777.6" r="2" fill="#111"/>
<circle cx="840.8" cy="791.5" r="6.1" fill="#062b6c"/>
<circle cx="840.8" cy="791.5" r="4.8" fill="#e5ac12"/>
<circle cx="840.8" cy="791.5" r="2" fill="#111"/>
<circle cx="840.8" cy="805.6" r="6.1" fill="#062b6c"/>
<circle cx="840.8" cy="805.6" r="4.8" fill="#e5ac12"/>
<circle cx="840.8" cy="805.6" r="2" fill="#111"/>
<circle cx="871.6" cy="777.6" r="6.1" fill="#062b6c"/>
<circle cx="871.6" cy="777.6" r="4.8" fill="#e5ac12"/>
<circle cx="871.6" cy="777.6" r="2" fill="#111"/>
<circle cx="871.6" cy="791.5" r="6.1" fill="#062b6c"/>
<circle cx="871.6" cy="791.5" r="4.8" fill="#e5ac12"/>
<circle cx="871.6" cy="791.5" r="2" fill="#111"/>
<circle cx="871.6" cy="805.6" r="6.1" fill="#062b6c"/>
<circle cx="871.6" cy="805.6" r="4.8" fill="#e5ac12"/>
<circle cx="871.6" cy="805.6" r="2" fill="#111"/>
<rect x="851" y="791.5" width="10.7" height="15.8" fill="none" stroke="#eef4fa" stroke-width="1.2"/>
<circle cx="913.3" cy="792" r="18.6" fill="none" stroke="#eef4fa" stroke-width="1.3"/>
<path d="M897.5 782 A18.6 18.6 0 0 1 929.1 782 Z" fill="#eef4fa"/>
<circle cx="913.3" cy="780.3" r="6.1" fill="#062b6c"/>
<circle cx="913.3" cy="780.3" r="4.8" fill="#e5ac12"/>
<circle cx="913.3" cy="780.3" r="2" fill="#111"/>
<circle cx="913.3" cy="801.4" r="6.1" fill="#062b6c"/>
<circle cx="913.3" cy="801.4" r="4.8" fill="#e5ac12"/>
<circle cx="913.3" cy="801.4" r="2" fill="#111"/>
<text x="913.5" y="793.8" font-family="Liberation Sans" font-size="7" fill="#eef4fa" text-anchor="middle" textLength="18" lengthAdjust="spacingAndGlyphs">100uf</text>
<path d="M900 800.5 H908 M904 796.5 V804.5" fill="none" stroke="#eef4fa" stroke-width="1.3"/>
<rect x="938.6" y="771.6" width="14.9" height="42.2" rx="7.45" fill="none" stroke="#eef4fa" stroke-width="1.3"/>
<circle cx="946" cy="779" r="6.1" fill="#062b6c"/>
<circle cx="946" cy="779" r="4.8" fill="#e5ac12"/>
<circle cx="946" cy="779" r="2" fill="#111"/>
<circle cx="946" cy="806.8" r="6.1" fill="#062b6c"/>
<circle cx="946" cy="806.8" r="4.8" fill="#e5ac12"/>
<circle cx="946" cy="806.8" r="2" fill="#111"/>
<text x="946" y="792.8" font-family="Liberation Sans" font-size="7" fill="#eef4fa" text-anchor="middle" transform="rotate(90 946 792.8)" dy="2.5">104</text></svg>
</div>
</div><!--/doc-->
<div style="position:absolute;left:0;top:148px;width:1209px;height:4px;background:linear-gradient(rgba(100,120,128,0.16),rgba(100,120,128,0.09) 40%,rgba(100,120,128,0))"></div>
<!-- status -->
<div style="position:absolute;left:0;top:1015px;width:1209px;height:22px;background:#dbe6eb;border-top:1px solid #c6d0d4"></div>
<div id="status"><div class="a" style="left:14px;top:1020px;font-size:12.5px;color:#222">页面: 37/37</div>
<div class="sep" style="left:90px;top:1020px;height:13px;background:#c6cdd0"></div>
<div class="a" style="left:103px;top:1020px;font-size:12.2px;color:#222">字数: 11461</div>
<div class="sep" style="left:181px;top:1020px;height:13px;background:#c6cdd0"></div>
<div class="a" style="left:194px;top:1020.5px;font-size:12px;color:#222">拼写检查: 关闭</div>
<svg style="left:282px;top:1025px" width="6" height="4" viewBox="0 0 6 4"><path d="M0.6 0.6 L3 3 L5.4 0.6" fill="none" stroke="#444" stroke-width="1.1"/></svg>
<svg style="left:309px;top:1019px" width="13" height="15" viewBox="0 0 13 15"><path d="M5 13.4 H0.6 V0.6 H8 L10.4 3 V5" fill="none" stroke="#333" stroke-width="1"/><circle cx="8" cy="9.5" r="2.6" fill="none" stroke="#3d6ee8" stroke-width="1.1"/><path d="M10 11.5 L12.3 13.8" stroke="#3d6ee8" stroke-width="1.1"/></svg>
<div class="a" style="left:327px;top:1020.5px;font-size:12px;color:#222">AI 校对</div>
<svg style="left:371px;top:1025px" width="6" height="4" viewBox="0 0 6 4"><path d="M0.6 0.6 L3 3 L5.4 0.6" fill="none" stroke="#444" stroke-width="1.1"/></svg>
<div class="sep" style="left:394px;top:1020px;height:13px;background:#c6cdd0"></div>
<svg style="left:410px;top:1020px" width="13" height="12" viewBox="0 0 13 12"><path d="M6.5 0.5 L12.7 11.5 H0.3 Z" fill="#f5b020"/><path d="M6.5 4 V8" stroke="#333" stroke-width="1.3"/><circle cx="6.5" cy="9.8" r="0.8" fill="#333"/></svg>
<div class="a" style="left:427px;top:1020.5px;font-size:12px;color:#222">缺失字体</div>
</div><!--/status-->
</body></html>
